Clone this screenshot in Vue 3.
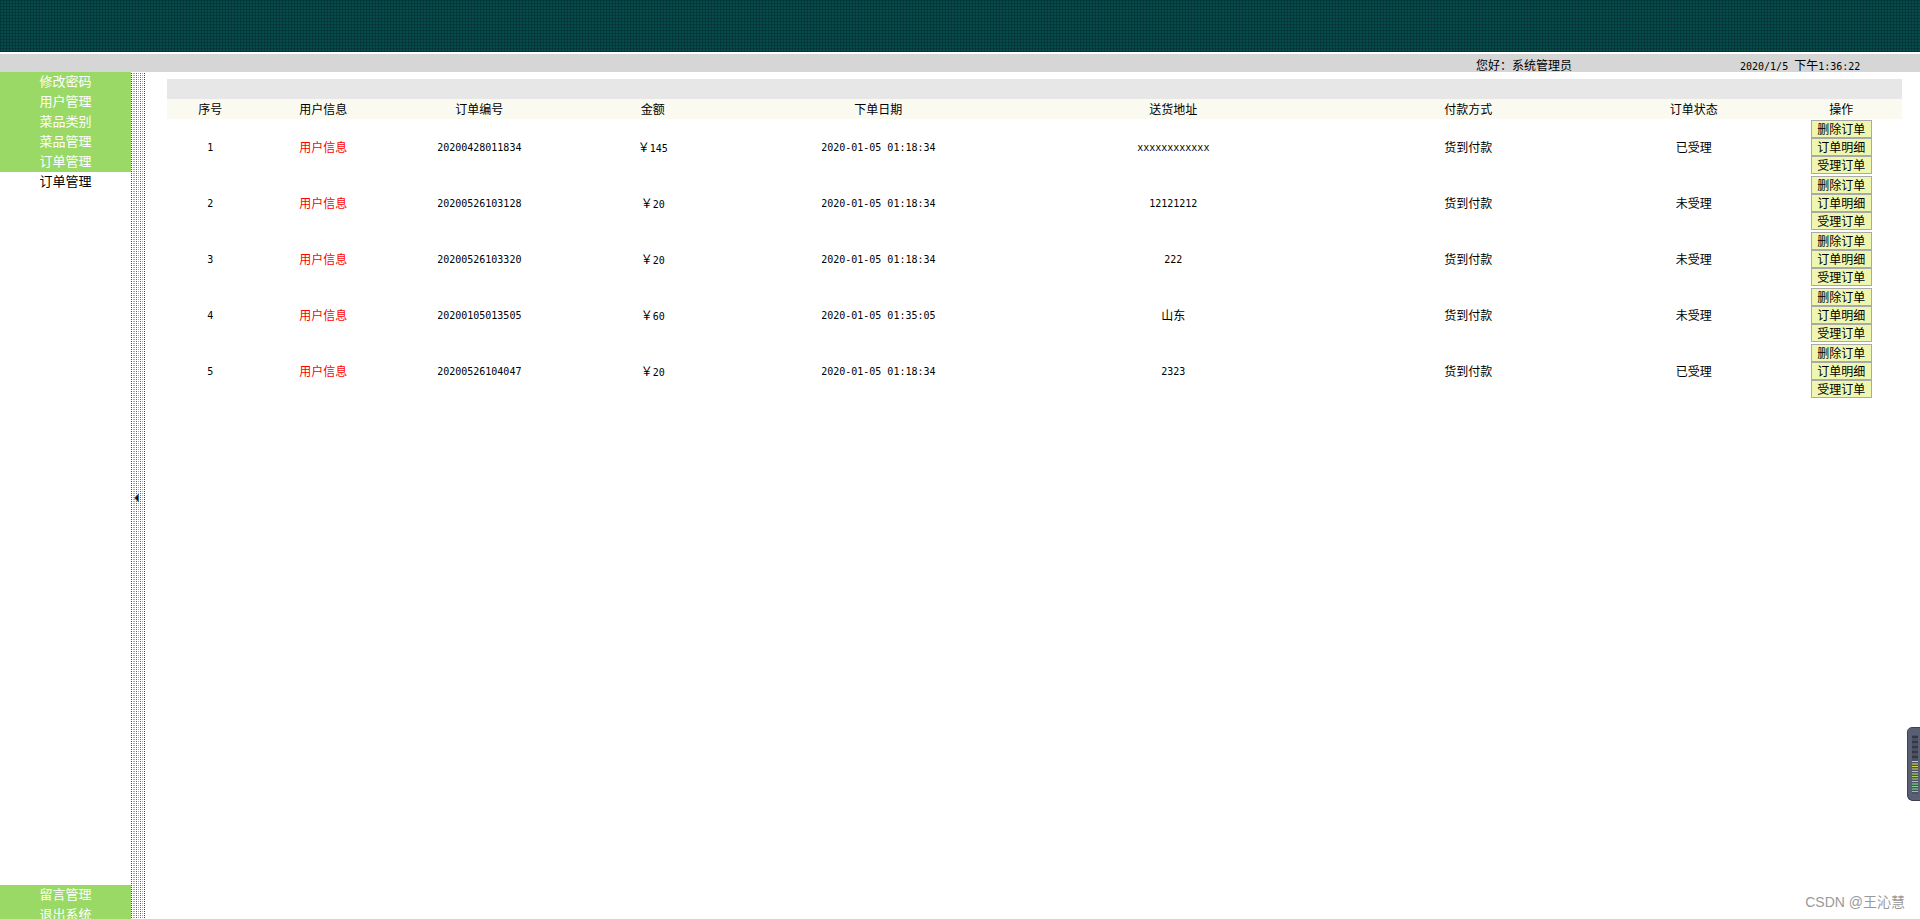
<script setup>
const topMenu = ['修改密码', '用户管理', '菜品类别', '菜品管理', '订单管理']
const bottomMenu = ['留言管理', '退出系统']
const columns = [
  { name: '序号', width: '5%' },
  { name: '用户信息', width: '8%' },
  { name: '订单编号', width: '10%' },
  { name: '金额', width: '10%' },
  { name: '下单日期', width: '16%' },
  { name: '送货地址', width: '18%' },
  { name: '付款方式', width: '16%' },
  { name: '订单状态', width: '10%' },
  { name: '操作', width: '7%' },
]
const actions = ['删除订单', '订单明细', '受理订单']
const orders = [
  { no: '20200428011834', sum: '145', date: '2020-01-05 01:18:34', address: 'xxxxxxxxxxxx', status: '已受理' },
  { no: '20200526103128', sum: '20', date: '2020-01-05 01:18:34', address: '12121212', status: '未受理' },
  { no: '20200526103320', sum: '20', date: '2020-01-05 01:18:34', address: '222', status: '未受理' },
  { no: '20200105013505', sum: '60', date: '2020-01-05 01:35:05', address: '山东', han: true, status: '未受理' },
  { no: '20200526104047', sum: '20', date: '2020-01-05 01:18:34', address: '2323', status: '已受理' },
]
const idleBars = [9, 14, 19, 24, 29]
const liveBars = ['#d8d552', '#d0d450', '#bcd45c', '#a4d66c', '#8ed880', '#78da98', '#62dab4']
</script>

<template>
  <div class="page">
    <header class="banner"></header>
    <div class="status">
      <span class="greeting">您好：系统管理员</span>
      <time class="clock num">2020/1/5 <span class="han">下午</span>1:36:22</time>
    </div>
    <div class="body">
      <nav class="side">
        <a v-for="m in topMenu" :key="m" class="item" href="#">{{ m }}</a>
        <a class="item sub" href="#">订单管理</a>
        <div class="side-bottom">
          <a v-for="m in bottomMenu" :key="m" class="item" href="#">{{ m }}</a>
        </div>
      </nav>
      <button class="divider" type="button" aria-label="收起菜单">
        <svg width="14" height="8" viewBox="0 0 14 8" aria-hidden="true">
          <path d="M3 4 L7 0 V8 Z" fill="#b06a3a" />
          <path d="M4 4 L7 1 V7 Z" fill="#120d0a" />
          <path d="M7 0 H8 V8 H7 Z" fill="#1d6fc4" />
        </svg>
      </button>
      <main class="content">
        <div class="titlebar"></div>
        <table class="orders">
          <colgroup>
            <col v-for="c in columns" :key="c.name" :style="{ width: c.width }" />
          </colgroup>
          <thead>
            <tr>
              <th v-for="c in columns" :key="c.name" scope="col">{{ c.name }}</th>
            </tr>
          </thead>
          <tbody>
            <tr v-for="(o, i) in orders" :key="o.no">
              <td class="num">{{ i + 1 }}</td>
              <td><a class="user" href="#">用户信息</a></td>
              <td class="num">{{ o.no }}</td>
              <td class="num"><span class="han">￥</span>{{ o.sum }}</td>
              <td class="num">{{ o.date }}</td>
              <td :class="{ num: !o.han }">{{ o.address }}</td>
              <td>货到付款</td>
              <td>{{ o.status }}</td>
              <td>
                <div class="actions">
                  <button v-for="a in actions" :key="a" type="button">{{ a }}</button>
                </div>
              </td>
            </tr>
          </tbody>
        </table>
      </main>
    </div>
    <svg class="gauge" width="13" height="74" viewBox="0 0 13 74" aria-hidden="true">
      <path d="M13 0.5 H5 Q0.5 1 0.5 5 V69 Q1 73 5 73.5 H13" fill="#596073" stroke="#3f434f" />
      <rect x="5" y="8" width="6" height="59" fill="#4b5162" />
      <rect v-for="y in idleBars" :key="y" x="5" :y="y" width="6" height="2" fill="#343844" />
      <g v-for="(c, i) in liveBars" :key="c" :fill="c">
        <rect x="5" :y="34 + i * 5" width="6" height="1" />
        <rect v-if="i < 6" x="5" :y="36 + i * 5" width="6" height="2" opacity="0.55" />
      </g>
    </svg>
    <div class="credit">CSDN @王沁慧</div>
  </div>
</template>

<style>
body {
  margin: 0;
}
</style>

<style scoped>
.page {
  display: flex;
  flex-direction: column;
  height: 100vh;
  overflow: hidden;
  position: relative;
  background: #fff;
  color: #000;
  font: 12px/18px "Noto Sans CJK SC", sans-serif;
}
.banner {
  flex: none;
  height: 52px;
  background:
    repeating-linear-gradient(90deg, rgba(0, 36, 38, 0.4) 0 1px, transparent 1px 3px),
    repeating-linear-gradient(0deg, rgba(0, 36, 38, 0.4) 0 1px, transparent 1px 3px),
    #064a4a;
}
.status {
  flex: none;
  display: grid;
  grid-template-columns: 76.875% 13.75% 1fr;
  height: 18px;
  margin-top: 2px;
  background: #d6d6d6;
  line-height: 22px;
}
.greeting {
  grid-column: 2;
}
.num {
  font-family: "DejaVu Sans Mono", "Noto Sans CJK SC", monospace;
  font-size: 10px;
}
.han {
  font-family: "Noto Sans CJK SC", sans-serif;
  font-size: 12px;
}
.clock {
  white-space: nowrap;
}
.body {
  flex: 1;
  min-height: 0;
  display: flex;
}
.side {
  flex: none;
  display: flex;
  flex-direction: column;
  width: 131px;
}
.item {
  flex: none;
  display: block;
  height: 20px;
  background: #9bd966;
  color: #fff;
  font-size: 13px;
  line-height: 18px;
  text-align: center;
  text-decoration: none;
}
.sub {
  background: #fff;
  color: #000;
}
.side-bottom {
  height: 34px;
  margin-top: auto;
  overflow: hidden;
}
.divider {
  flex: none;
  display: flex;
  align-items: center;
  width: 14px;
  padding: 4px 0 0;
  border: 0;
  background:
    repeating-linear-gradient(0deg, #fff 0 1px, transparent 1px 2px),
    linear-gradient(90deg, #444 0 1px, #fff 1px 2px, #aaa 2px 4px, #fff 4px 5px, #666 5px 6px, #fff 6px 7px, #aaa 7px 8px, #fff 8px 9px, #666 9px 10px, #fff 10px 11px, #aaa 11px 12px, #fff 12px 13px, #444 13px 14px);
}
.content {
  flex: 1;
  padding: 7px 18px 0 22px;
}
.titlebar {
  height: 20px;
  background: #e7e7e7;
}
.orders {
  width: 100%;
  border-collapse: collapse;
  table-layout: fixed;
  text-align: center;
}
th {
  height: 20px;
  padding: 0;
  background: #fafaf1;
  font-weight: 400;
}
td {
  height: 54px;
  padding: 1px 0;
}
td.num {
  padding: 2px 0 0;
}
.user {
  color: #f00;
  text-decoration: none;
}
.actions {
  display: flex;
  flex-direction: column;
  align-items: center;
}
.actions button {
  width: 61px;
  height: 18px;
  padding: 0;
  border: 1px solid #a9a9a9;
  background: #eff6b0;
  color: #000;
  font: 12px/16px "Noto Sans CJK SC", sans-serif;
}
.gauge {
  position: absolute;
  right: 0;
  bottom: 118px;
}
.credit {
  position: absolute;
  right: 15px;
  bottom: 7px;
  color: #999;
  font: 14px/20px "Liberation Sans", "Noto Sans CJK SC", sans-serif;
}
</style>
